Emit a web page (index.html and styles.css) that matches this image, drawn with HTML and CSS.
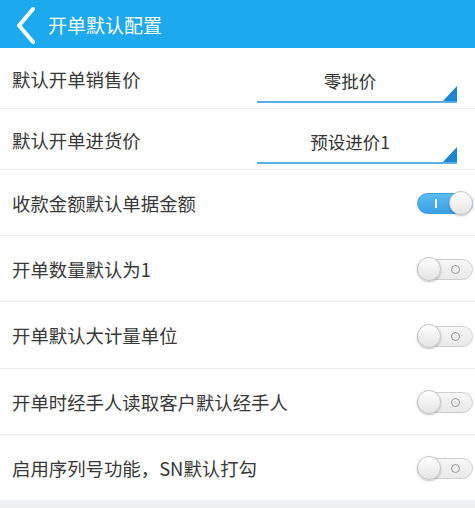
FILE: index.html
```html
<!DOCTYPE html>
<html lang="zh-CN">
<head>
    <meta charset="UTF-8">
    <meta name="viewport" content="width=device-width, initial-scale=1.0">
    <title>开单默认配置</title>
    <link rel="stylesheet" href="styles.css">
</head>
<body>
    <header class="topbar">
        <svg class="back" width="24" height="40" viewBox="0 0 24 40">
            <polyline points="18,2 4,18.5 18,35" fill="none" stroke="#fff" stroke-width="4" stroke-linecap="round" stroke-linejoin="round"/>
        </svg>
        <h1>开单默认配置</h1>
    </header>
    <ul class="settings">
        <li class="row row-select">
            <span class="label">默认开单销售价</span>
            <div class="select"><span>零批价</span></div>
        </li>
        <li class="row row-select">
            <span class="label">默认开单进货价</span>
            <div class="select"><span>预设进价1</span></div>
        </li>
        <li class="row">
            <span class="label">收款金额默认单据金额</span>
            <span class="switch on"></span>
        </li>
        <li class="row">
            <span class="label">开单数量默认为1</span>
            <span class="switch"></span>
        </li>
        <li class="row">
            <span class="label">开单默认大计量单位</span>
            <span class="switch"></span>
        </li>
        <li class="row">
            <span class="label">开单时经手人读取客户默认经手人</span>
            <span class="switch"></span>
        </li>
        <li class="row">
            <span class="label">启用序列号功能，SN默认打勾</span>
            <span class="switch"></span>
        </li>
    </ul>
</body>
</html>
```

FILE: styles.css
```css
body {
    margin: 0;
    background-color: #eef1f1;
    font-family: "Noto Sans CJK SC", "Noto Sans", sans-serif;
    color: #383838;
}
.topbar {
    height: 48px;
    background-color: #1ca9ee;
    display: flex;
    align-items: center;
    padding-left: 15px;
}
.back {
    display: block;
    margin-top: 5px;
}
.topbar h1 {
    margin: 0 0 0 9px;
    font-size: 19px;
    font-weight: normal;
    color: #fff;
}
.settings {
    list-style: none;
    margin: 0;
    padding: 0;
    background-color: #fff;
}
.row {
    height: 66px;
    display: flex;
    align-items: center;
    justify-content: space-between;
    padding-left: 12px;
    border-bottom: 1px solid #ebebeb;
    box-sizing: border-box;
}
.row:nth-child(5) {
    height: 67px;
}
.row:last-child {
    height: 65px;
    border-bottom: none;
}
.row-select {
    height: 61px;
    align-items: flex-end;
}
.label {
    font-size: 18.4px;
    line-height: 24px;
}
.row-select .label {
    align-self: center;
    margin-top: 2px;
}
.select {
    position: relative;
    width: 200px;
    height: 40px;
    margin-right: 18px;
    margin-bottom: 5px;
    border-bottom: 2px solid #5aaee6;
    box-sizing: border-box;
    display: flex;
    align-items: center;
    padding: 0 14px 4px 0;
}
.select span {
    flex: 1;
    text-align: center;
    font-size: 17.5px;
    color: #333;
}
.select::after {
    content: "";
    position: absolute;
    right: 0;
    bottom: 0;
    border-style: solid;
    border-width: 0 0 15px 14px;
    border-color: transparent transparent #1a86d2 transparent;
}
.switch {
    position: relative;
    width: 56px;
    height: 21px;
    margin-right: 2px;
    margin-top: 2px;
    border-radius: 11px;
    border: 1px solid #cfcfcf;
    background: linear-gradient(#f7f7f7, #e9e9e9);
    box-sizing: border-box;
}
.switch::before {
    content: "";
    position: absolute;
    right: 12px;
    top: 5px;
    width: 7px;
    height: 7px;
    border: 1.5px solid #999;
    border-radius: 50%;
}
.switch::after {
    content: "";
    position: absolute;
    left: -1px;
    top: -3px;
    width: 24px;
    height: 24px;
    border-radius: 50%;
    background: linear-gradient(#ffffff, #e4e4e4);
    border: 1px solid #c4c4c4;
    box-sizing: border-box;
    box-shadow: 0 1px 2px rgba(0, 0, 0, 0.25);
}
.switch.on {
    border-color: #3d9fe0;
    background: linear-gradient(#5cbcf5, #3a9fe6);
}
.switch.on::before {
    right: auto;
    left: 17px;
    top: 5px;
    width: 2px;
    height: 9px;
    border: none;
    border-radius: 0;
    background-color: #fff;
}
.switch.on::after {
    left: auto;
    right: -1px;
}
```
